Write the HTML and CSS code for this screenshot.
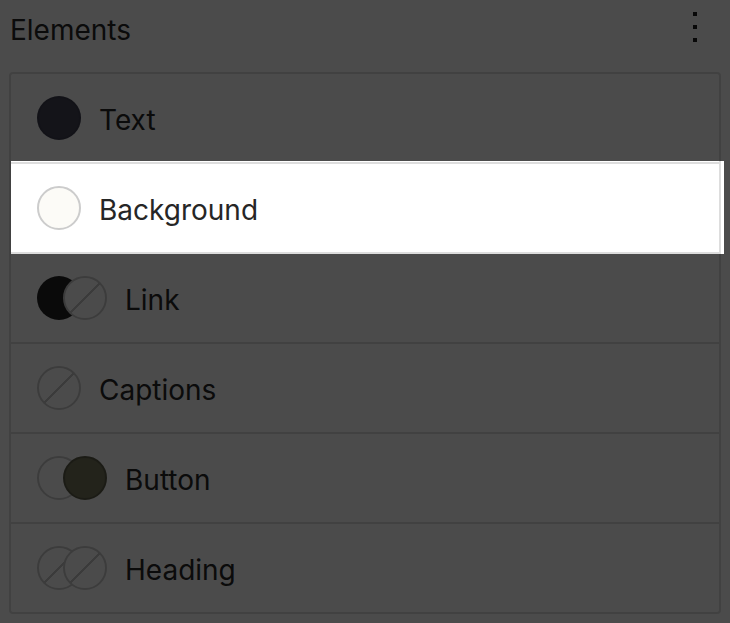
FILE: index.html
```html
<!DOCTYPE html>
<html lang="en">
<head>
<meta charset="utf-8">
<title>Elements</title>
<link rel="stylesheet" href="styles.css">
</head>
<body>
  <header class="header">
    <h2 class="title">Elements</h2>
    <button class="menu" aria-label="Options">
      <svg width="48" height="48" viewBox="0 0 48 48" aria-hidden="true">
        <rect x="22" y="9" width="4" height="4" fill="#1e1e1e"/>
        <rect x="22" y="22" width="4" height="4" fill="#1e1e1e"/>
        <rect x="22" y="35" width="4" height="4" fill="#1e1e1e"/>
      </svg>
    </button>
  </header>
  <div class="panel">
    <div class="row">
      <div class="swatches"><span class="dot dot-text"></span></div>
      <span class="label">Text</span>
    </div>
    <div class="row is-active">
      <div class="swatches"><span class="dot dot-bg"></span></div>
      <span class="label">Background</span>
      <span class="spotlight"></span>
    </div>
    <div class="row">
      <div class="swatches"><span class="dot dot-black"></span><span class="dot dot-empty"></span></div>
      <span class="label">Link</span>
    </div>
    <div class="row">
      <div class="swatches"><span class="dot dot-empty"></span></div>
      <span class="label">Captions</span>
    </div>
    <div class="row">
      <div class="swatches"><span class="dot dot-plain"></span><span class="dot dot-olive"></span></div>
      <span class="label">Button</span>
    </div>
    <div class="row">
      <div class="swatches"><span class="dot dot-empty"></span><span class="dot dot-empty"></span></div>
      <span class="label">Heading</span>
    </div>
  </div>
</body>
</html>
```

FILE: styles.css
```css
* { box-sizing: border-box; }

html, body {
  margin: 0;
  background: #ffffff;
}

body {
  font-family: Inter, "Noto Sans", "Liberation Sans", sans-serif;
  color: #262626;
  width: 730px;
  height: 623px;
  overflow: hidden;
}

.header {
  height: 56px;
  display: flex;
  align-items: center;
  justify-content: space-between;
  padding: 0 11px 0 10px;
}

.title {
  margin: 4px 0 0 0;
  font-size: 28px;
  font-weight: 400;
  line-height: 1;
}

.menu {
  width: 48px;
  height: 48px;
  margin-top: -2px;
  padding: 0;
  border: 0;
  background: transparent;
  display: flex;
}

.panel {
  margin: 16px 9px 0 9px;
  border: 2px solid #dddddd;
  border-radius: 4px;
}

.row {
  height: 88px;
  display: flex;
  align-items: center;
  gap: 18px;
  padding-left: 26px;
}

.row + .row {
  border-top: 2px solid #dddddd;
  height: 90px;
}

.row.is-active {
  position: relative;
}

.spotlight {
  position: absolute;
  top: -3px;
  bottom: -2px;
  left: 0;
  right: -5px;
  box-shadow: 0 0 0 2000px rgba(0, 0, 0, 0.705);
  pointer-events: none;
}

.swatches {
  display: flex;
}

.dot {
  width: 44px;
  height: 44px;
  border-radius: 50%;
  flex: none;
  background: #ffffff;
}

.dot + .dot {
  margin-left: -18px;
}

.label {
  font-size: 28px;
  line-height: 1;
  padding-top: 3px;
}

.dot-text {
  background: #444457;
  box-shadow: inset 0 0 0 2px rgba(0, 0, 0, 0.08);
}

.dot-bg {
  background: #fcfbf7;
  border: 2px solid #cccccc;
}

.dot-black {
  background: #222222;
}

.dot-plain {
  background: #ffffff;
  border: 2px solid #cccccc;
}

.dot-olive {
  background: #76765c;
  border: 2px solid #5e5e4a;
}

.dot-empty {
  border: 2px solid #cccccc;
  background:
    linear-gradient(-45deg, transparent calc(50% - 1px), #c8c8c8 calc(50% - 1px), #c8c8c8 calc(50% + 1px), transparent calc(50% + 1px)),
    #ffffff;
}
```
